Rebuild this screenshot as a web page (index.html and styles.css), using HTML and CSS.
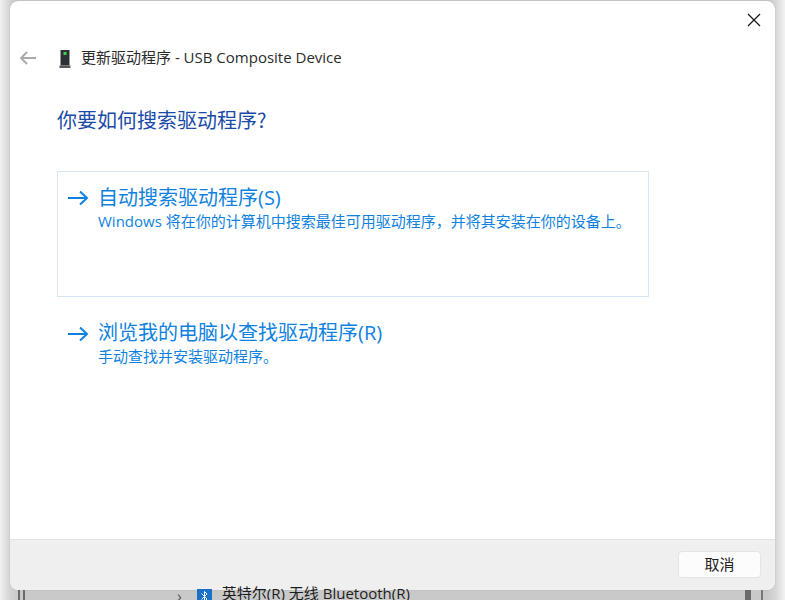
FILE: index.html
```html
<!DOCTYPE html>
<html lang="zh-CN">
<head>
<meta charset="utf-8">
<title>更新驱动程序</title>
<link rel="stylesheet" href="styles.css">
</head>
<body>
<div class="desktop">
  <div class="dialog">
    <div class="titlebar">
      <svg class="close" width="16" height="16" viewBox="0 0 16 16"><path d="M2 2 14 14M14 2 2 14" stroke="#1a1a1a" stroke-width="1.3" fill="none"/></svg>
    </div>
    <div class="nav">
      <svg class="back" width="18" height="14" viewBox="0 0 18 14"><path d="M17 7H2M8 1 2 7l6 6" stroke="#a9a9a9" stroke-width="1.8" fill="none"/></svg>
      <svg class="device" width="14" height="20" viewBox="0 0 14 20"><path d="M2.500 1h9v15.500h-9z" fill="#2e3236"/><path d="M1.500 16.500h11V19h-11z" fill="#55595d"/><path d="M5.500 3h3v3h-3z" fill="#3fd24f"/></svg>
      <span class="nav-title">更新驱动程序 - USB Composite Device</span>
    </div>
    <h1 class="heading">你要如何搜索驱动程序?</h1>
    <div class="options">
      <div class="option selected">
        <svg class="arrow" width="22" height="16" viewBox="0 0 22 16"><path d="M1 8h19M13 1.500 20 8l-7 6.500" stroke="#0f82e0" stroke-width="2" fill="none"/></svg>
        <div class="option-text">
          <div class="option-title">自动搜索驱动程序(S)</div>
          <div class="option-desc">Windows 将在你的计算机中搜索最佳可用驱动程序，并将其安装在你的设备上。</div>
        </div>
      </div>
      <div class="option">
        <svg class="arrow" width="22" height="16" viewBox="0 0 22 16"><path d="M1 8h19M13 1.500 20 8l-7 6.500" stroke="#0f82e0" stroke-width="2" fill="none"/></svg>
        <div class="option-text">
          <div class="option-title">浏览我的电脑以查找驱动程序(R)</div>
          <div class="option-desc">手动查找并安装驱动程序。</div>
        </div>
      </div>
    </div>
    <div class="footer">
      <button class="cancel">取消</button>
    </div>
  </div>
  <div class="behind">
    <span class="chevron">›</span>
    <svg class="bt" width="15" height="15" viewBox="0 0 15 15"><rect width="15" height="15" fill="#1a6fc9"/><path d="M4.500 4.500 10 10l-2.500 2.500v-10L10 5l-5.500 5.500" stroke="#fff" stroke-width="1" fill="none"/></svg>
    <span class="behind-text">英特尔(R) 无线 Bluetooth(R)</span>
  </div>
</div>
</body>
</html>
```
FILE: styles.css
```css
* { box-sizing: border-box; }
html, body { margin: 0; padding: 0; height: 600px; overflow: hidden; }
body {
  font-family: "Noto Sans CJK SC", "Open Sans", sans-serif;
  background: #c9c9c9;
}
.desktop {
  width: 785px;
  height: 600px;
  padding: 1px 10px 0;
  overflow: hidden;
  background:
    linear-gradient(90deg, #f0f0f0 0, #d4d4d4 10px, #c9c9c9 18px, #c9c9c9 767px, #d6d6d6 775px, #f2f2f2 785px);
}
.dialog {
  width: 765px;
  height: 589px;
  background: #fff;
  border-radius: 8px;
  box-shadow: 0 0 1px #8a8a8a;
  overflow: hidden;
  display: flex;
  flex-direction: column;
}
.titlebar {
  height: 33px;
  display: flex;
  justify-content: flex-end;
  align-items: flex-start;
  padding: 11px 13px 0 0;
  flex: none;
}
.nav {
  height: 48px;
  display: flex;
  align-items: center;
  padding-left: 9px;
  flex: none;
}
.back { margin-right: 21px; }
.device { margin-right: 9px; margin-top: 1px; }
.nav-title {
  font-family: "Open Sans", "Noto Sans CJK SC", sans-serif;
  font-size: 15px;
  line-height: 20px;
  color: #2b2b2b;
  white-space: nowrap;
  margin-bottom: 2px;
}
.heading {
  margin: 26px 0 0;
  padding: 0 0 0 47px;
  height: 24px;
  font-size: 20px;
  line-height: 24px;
  font-weight: 400;
  color: #1a4aa8;
  flex: none;
}
.options {
  margin: 39px 0 0 47px;
  width: 592px;
  display: flex;
  flex-direction: column;
  gap: 10px;
  flex: none;
}
.option {
  display: flex;
  align-items: flex-start;
  height: 70px;
  padding: 11px 9px 0 9px;
  border: 1px solid transparent;
}
.option.selected { height: 126px; padding-top: 12px; border-color: #d5e7f7; }
.arrow { margin-top: 7px; margin-right: 9px; flex: none; }
.option.selected .arrow { margin-top: 6px; }
.option-title {
  font-family: "Open Sans", "Noto Sans CJK SC", sans-serif;
  font-size: 20px;
  line-height: 27px;
  color: #0f82e0;
  white-space: nowrap;
}
.option-desc {
  font-family: "Open Sans", "Noto Sans CJK SC", sans-serif;
  font-size: 15px;
  line-height: 20px;
  color: #0f82e0;
  white-space: nowrap;
}
.footer {
  margin-top: auto;
  height: 51px;
  background: #efefef;
  border-top: 1px solid #e3e3e3;
  display: flex;
  justify-content: flex-end;
  align-items: flex-start;
  padding: 11px 14px 0 0;
  flex: none;
}
.cancel {
  width: 83px;
  height: 27px;
  background: #fcfcfc;
  border: 1px solid #e4e4e4;
  border-radius: 4px;
  font-family: "Noto Sans CJK SC", sans-serif;
  font-size: 15px;
  line-height: 1;
  color: #222;
  padding: 0 0 2px;
}
.behind {
  height: 10px;
  display: flex;
  align-items: flex-start;
  padding-left: 167px;
  white-space: nowrap;
  font-family: "Open Sans", "Noto Sans CJK SC", sans-serif;
  background:
    linear-gradient(90deg, #6b6b6b 0, #6b6b6b 2px, transparent 2px, transparent 5px, #6b6b6b 5px, #6b6b6b 7px, transparent 7px) 8px 0 / 8px 100% no-repeat,
    linear-gradient(90deg, #6b6b6b 0, #6b6b6b 6px, #c9c9c9 6px, #c9c9c9 16px, #777 16px, #777 18px) 735px 0 / 18px 100% no-repeat;
}
.chevron { font-size: 16px; line-height: 10px; color: #555; margin-right: 15px; margin-top: 1px; }
.bt { margin-right: 10px; margin-top: -1px; flex: none; }
.behind-text { font-size: 15px; line-height: 15px; color: #1e1e1e; margin-top: -4px; }
```
